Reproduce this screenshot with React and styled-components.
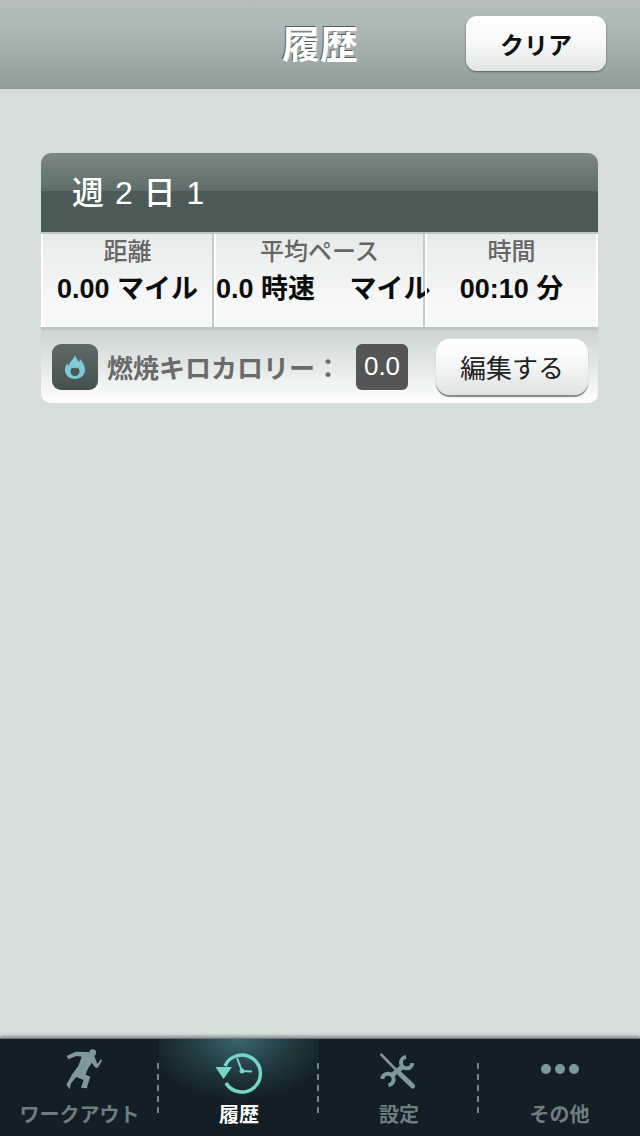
import React from 'react'
import styled, { createGlobalStyle } from 'styled-components'

const GlobalStyle = createGlobalStyle`
  html, body {
    margin: 0;
    padding: 0;
    background: #d5dedd;
  }
  body {
    font-family: 'Liberation Sans', 'Noto Sans CJK JP', sans-serif;
  }
`

const Page = styled.div`
  width: 640px;
  height: 1136px;
  display: flex;
  flex-direction: column;
  overflow: hidden;
  background: #d5dedd;
`
const Header = styled.header`
  height: 89px;
  flex-shrink: 0;
  display: grid;
  grid-template-columns: 1fr auto 1fr;
  align-items: center;
  background: linear-gradient(180deg, #b5c0be 0%, #adb9b7 30%, #8f9d9b 100%);
`
const Title = styled.h1`
  grid-column: 2;
  margin: 0;
  font-size: 38px;
  line-height: 1;
  font-weight: 700;
  color: #fff;
  text-shadow: -1px -1px 0 #565f5e;
`
const ClearButton = styled.button`
  grid-column: 3;
  justify-self: end;
  width: 140px;
  height: 55px;
  margin: -2px 34px 0 0;
  padding: 0;
  border: 0;
  border-radius: 11px;
  background: linear-gradient(180deg, #ffffff 0%, #f8f8f8 50%, #e2e4e4 100%);
  box-shadow: 0 1px 2px rgba(40, 50, 50, 0.6);
  font-family: inherit;
  font-size: 24px;
  font-weight: 700;
  color: #111;
`
const Main = styled.main`
  flex: 1;
  padding: 64px 42px 0 41px;
`
const Card = styled.section`
  height: 250px;
  display: flex;
  flex-direction: column;
  border-radius: 10px;
  overflow: hidden;
  background: #f4f6f6;
`
const CardTitle = styled.div`
  height: 79px;
  flex-shrink: 0;
  display: flex;
  align-items: center;
  padding: 0 0 6px 31px;
  box-sizing: border-box;
  font-size: 32px;
  font-weight: 500;
  color: #fff;
  word-spacing: 2px;
  background: linear-gradient(180deg, #7a8784 0%, #5f6e6a 48%, #4c5b57 48%, #4b5a56 100%);
`
const Stats = styled.div`
  height: 98px;
  flex-shrink: 0;
  display: flex;
  box-sizing: border-box;
  border-top: 2px solid #bcc6c4;
  border-bottom: 3px solid #bcc6c4;
  background: linear-gradient(180deg, #e6ebea 0%, #f6f7f7 70%);
`
const Stat = styled.div`
  width: ${(props) => props.$width}px;
  flex-shrink: 0;
  box-sizing: border-box;
  border-left: 2px solid #fff;
  border-right: 2px solid ${(props) => (props.$last ? '#fff' : '#c3cbca')};
  text-align: center;
  white-space: pre;
`
const StatLabel = styled.div`
  margin-top: 3px;
  height: 30px;
  font-size: 24px;
  line-height: 30px;
  font-weight: 500;
  color: #666;
`
const StatValue = styled.div`
  margin-top: 4px;
  font-size: 27px;
  line-height: 36px;
  font-weight: 700;
  color: #0c0c0c;
`
const BurnRow = styled.div`
  flex: 1;
  display: flex;
  align-items: center;
  padding: 0 10px 0 11px;
  background: linear-gradient(180deg, #ccd5d4 0%, #e6ebea 55%, #ffffff 100%);
`
const FlameBox = styled.div`
  width: 46px;
  height: 46px;
  flex-shrink: 0;
  display: flex;
  align-items: center;
  justify-content: center;
  border-radius: 9px;
  background: linear-gradient(180deg, #5e6b68 0%, #45514f 100%);
`
const BurnLabel = styled.span`
  flex: 1;
  margin-left: 9px;
  font-size: 26px;
  font-weight: 700;
  color: #6a6a6a;
  white-space: pre;
`
const BurnValue = styled.div`
  width: 52px;
  height: 46px;
  display: flex;
  align-items: center;
  justify-content: center;
  border-radius: 6px;
  background: #555;
  font-size: 26px;
  color: #fff;
`
const EditButton = styled.button`
  width: 152px;
  height: 56px;
  margin: 0 0 0 28px;
  padding: 0;
  border: 0;
  border-radius: 14px;
  background: linear-gradient(180deg, #ffffff 0%, #f6f7f7 45%, #dfe2e2 100%);
  box-shadow: 0 2px 1px #7e8786;
  font-family: inherit;
  font-size: 26px;
  color: #222;
`
const TabBar = styled.nav`
  height: 98px;
  flex-shrink: 0;
  display: flex;
  background: #141e26;
  border-top: 1px solid #6f7675;
  box-sizing: border-box;
  box-shadow: 0 -2px 3px rgba(0, 0, 0, 0.35);
`
const Tab = styled.div`
  position: relative;
  width: ${(props) => props.$width}px;
  flex-shrink: 0;
  display: flex;
  flex-direction: column;
  align-items: center;
  background: ${(props) =>
    props.$active
      ? 'radial-gradient(ellipse 95px 62px at 50% 0, #39666a 0%, #21393f 55%, #141e26 100%)'
      : 'none'};
  &::after {
    content: '';
    display: ${(props) => (props.$last ? 'none' : 'block')};
    position: absolute;
    right: 0;
    top: 24px;
    width: 2px;
    height: 50px;
    background: repeating-linear-gradient(180deg, #70888b 0 6px, transparent 6px 11px);
  }
`
const TabIcon = styled.div`
  height: 60px;
  display: flex;
  align-items: center;
  justify-content: center;
`
const TabLabel = styled.span`
  font-size: 20px;
  line-height: 26px;
  margin-top: 3px;
  font-weight: 700;
  color: ${(props) => (props.$active ? '#fff' : '#6c7e81')};
  white-space: nowrap;
`

function Flame() {
  return (
    <svg width="24" height="26" viewBox="0 0 24 26">
      <path
        fill="#7ccbd9"
        d="M12 1c.6 3 3 4 3.6 7 1-.6 1.400-1.700 1.400-3 2.500 3 5 6.500 5 10.500C22 21.500 17.500 25 12 25S2 21.500 2 15.500c0-2.500 1-4.500 2.500-6.500.2 1.500.6 2.500 1.500 3C6 8 10.500 6 12 1z"
      />
      <path fill="#4a5654" d="M12 13.500c1 1.200 2 1 3 .2.800 1 1.500 2.300 1.500 3.800 0 2.500-2 4.500-4.500 4.500s-4.500-2-4.500-4.500c0-1.500.7-2.800 1.500-3.800 1 .8 2 1 3-.2z" />
    </svg>
  )
}

function Runner() {
  return (
    <svg width="70" height="55" viewBox="0 0 210 165" fill="#7f989b">
      <circle cx="143" cy="32" r="10" />
      <path d="M65 42 L92 29 L130 30 L148 42 L157 66 L168 52 L171 56 L158 78 L150 76 L140 62 L128 82 L122 98 L136 104 L126 135 L128 139 L108 137 L116 114 L94 105 L78 124 L74 142 L64 128 L82 96 L100 72 L110 44 L94 42 L70 52 Z" />
    </svg>
  )
}

function Clock() {
  return (
    <svg width="80" height="60" viewBox="0 0 80 60">
      <path d="M26 27A18.500 18.500 0 1 1 27 44" fill="none" stroke="#74d6c6" strokeWidth="3.500" />
      <path d="M16.500 28L33 28L24.500 40Z" fill="#74d6c6" />
      <path d="M38 19L43 32L53 32.500" fill="none" stroke="#74d6c6" strokeWidth="2" />
      <circle cx="43" cy="32" r="2.500" fill="#74d6c6" />
    </svg>
  )
}

function Tools() {
  return (
    <svg width="70" height="55" viewBox="0 0 210 165">
      <g fill="none" stroke="#7f989b" strokeLinecap="butt">
        <path d="M52 38L112 100" strokeWidth="8" strokeLinecap="round" />
        <path d="M108 96L146 132" strokeWidth="15" strokeLinecap="round" />
        <path d="M145 63.500A17 17 0 1 1 126.500 45" strokeWidth="12" />
        <path d="M55 110.500A17 17 0 1 1 73.500 129" strokeWidth="12" />
        <path d="M116 74L84 100" strokeWidth="15" />
      </g>
    </svg>
  )
}

function Dots() {
  return (
    <svg width="40" height="12" viewBox="0 0 40 12" fill="#7f989b">
      <circle cx="6" cy="6" r="5" />
      <circle cx="20" cy="6" r="5" />
      <circle cx="34" cy="6" r="5" />
    </svg>
  )
}

const stats = [
  { label: '距離', value: '0.00 マイル', width: 173 },
  { label: '平均ペース', value: '0.0 時速　 マイル', width: 211 },
  { label: '時間', value: '00:10 分', width: 173, last: true },
]

const tabs = [
  { label: 'ワークアウト', icon: <Runner />, width: 159 },
  { label: '履歴', icon: <Clock />, width: 160, active: true },
  { label: '設定', icon: <Tools />, width: 160 },
  { label: 'その他', icon: <Dots />, width: 161, last: true },
]

export default function App() {
  return (
    <Page>
      <GlobalStyle />
      <Header>
        <Title>履歴</Title>
        <ClearButton>クリア</ClearButton>
      </Header>
      <Main>
        <Card>
          <CardTitle>週 2 日 1</CardTitle>
          <Stats>
            {stats.map((stat) => (
              <Stat key={stat.label} $width={stat.width} $last={stat.last}>
                <StatLabel>{stat.label}</StatLabel>
                <StatValue>{stat.value}</StatValue>
              </Stat>
            ))}
          </Stats>
          <BurnRow>
            <FlameBox>
              <Flame />
            </FlameBox>
            <BurnLabel>燃焼キロカロリー：</BurnLabel>
            <BurnValue>0.0</BurnValue>
            <EditButton>編集する</EditButton>
          </BurnRow>
        </Card>
      </Main>
      <TabBar>
        {tabs.map((tab) => (
          <Tab key={tab.label} $width={tab.width} $active={tab.active} $last={tab.last}>
            <TabIcon>{tab.icon}</TabIcon>
            <TabLabel $active={tab.active}>{tab.label}</TabLabel>
          </Tab>
        ))}
      </TabBar>
    </Page>
  )
}
